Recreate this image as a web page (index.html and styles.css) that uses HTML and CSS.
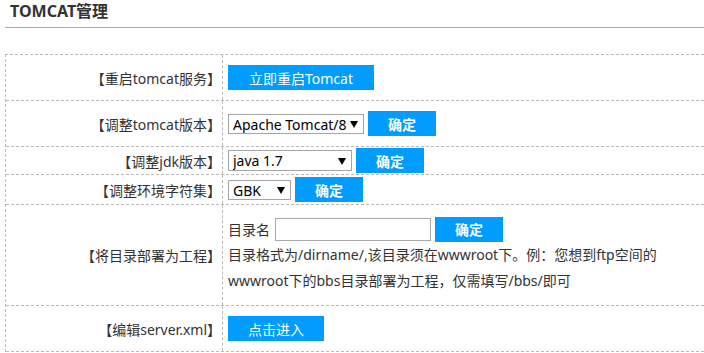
FILE: index.html
```html
<!DOCTYPE html>
<html lang="zh-CN">
<head>
    <meta charset="UTF-8">
    <title>TOMCAT管理</title>
    <link rel="stylesheet" href="styles.css">
</head>
<body>
    <div class="page">
        <h1 class="page-title">TOMCAT管理</h1>

        <div class="manage-panel">
            <div class="manage-row row-tall">
                <div class="row-label">【重启tomcat服务】</div>
                <div class="row-field">
                    <button type="button" class="btn btn-restart">立即重启Tomcat</button>
                </div>
            </div>

            <div class="manage-row row-tall">
                <div class="row-label">【调整tomcat版本】</div>
                <div class="row-field">
                    <span class="select-box select-tomcat">
                        <select>
                            <option>Apache Tomcat/8</option>
                            <option>Apache Tomcat/7</option>
                        </select>
                    </span>
                    <button type="button" class="btn btn-ok">确定</button>
                </div>
            </div>

            <div class="manage-row row-jdk">
                <div class="row-label">【调整jdk版本】</div>
                <div class="row-field">
                    <span class="select-box select-jdk">
                        <select>
                            <option>java 1.7</option>
                            <option>java 1.8</option>
                        </select>
                    </span>
                    <button type="button" class="btn btn-ok">确定</button>
                </div>
            </div>

            <div class="manage-row row-charset">
                <div class="row-label">【调整环境字符集】</div>
                <div class="row-field">
                    <span class="select-box select-charset">
                        <select>
                            <option>GBK</option>
                            <option>UTF-8</option>
                        </select>
                    </span>
                    <button type="button" class="btn btn-ok">确定</button>
                </div>
            </div>

            <div class="manage-row row-deploy">
                <div class="row-label">【将目录部署为工程】</div>
                <div class="row-field field-deploy">
                    <div class="deploy-form">
                        <span>目录名</span>
                        <input type="text" class="dir-input">
                        <button type="button" class="btn btn-ok">确定</button>
                    </div>
                    <p class="deploy-tip">目录格式为/dirname/,该目录须在wwwroot下。例：您想到ftp空间的<br>wwwroot下的bbs目录部署为工程，仅需填写/bbs/即可</p>
                </div>
            </div>

            <div class="manage-row row-tall">
                <div class="row-label">【编辑server.xml】</div>
                <div class="row-field">
                    <button type="button" class="btn btn-enter">点击进入</button>
                </div>
            </div>
        </div>
    </div>
</body>
</html>
```

FILE: styles.css
```css
* {
    margin: 0;
    padding: 0;
    box-sizing: border-box;
}

:root {
    --blue: #009cff;
    --dash: 1px dashed #bbb;
    --text: #333;
}

body {
    font-family: 'Noto Sans', 'Noto Sans CJK SC', sans-serif;
    color: var(--text);
    background: #fff;
    overflow: hidden;
}

.page {
    padding-left: 5px;
}

.page-title {
    height: 28px;
    padding-left: 5px;
    font-size: 16px;
    line-height: 22px;
    font-weight: bold;
    border-bottom: 1px solid #aaa;
}

.manage-panel {
    margin-top: 26px;
    border-top: var(--dash);
    border-left: var(--dash);
}

.manage-row {
    display: flex;
    border-bottom: var(--dash);
}

.row-tall { height: 46px; }
.row-jdk { height: 28px; }
.row-charset { height: 30px; }
.row-deploy { height: 101px; }

.row-label {
    width: 217px;
    flex: none;
    display: flex;
    align-items: center;
    justify-content: flex-end;
    padding-right: 1px;
    font-size: 14px;
    border-right: var(--dash);
}

.row-field {
    flex: 1;
    display: flex;
    align-items: center;
    gap: 4px;
    padding-left: 5px;
    font-size: 14px;
}

.field-deploy {
    flex-direction: column;
    align-items: flex-start;
    gap: 0;
    padding-top: 11px;
}

.deploy-form {
    display: flex;
    align-items: center;
    gap: 5px;
    height: 26px;
}

.deploy-form .btn {
    margin-left: -1px;
}

.dir-input {
    width: 156px;
    height: 23px;
    border: 1px solid #a9a9a9;
    font-size: 14px;
    padding: 0 4px;
    outline: none;
}

.deploy-tip {
    line-height: 26px;
    white-space: nowrap;
}

.btn {
    height: 25px;
    border: none;
    background: var(--blue);
    color: #fff;
    font-family: inherit;
    font-size: 14px;
    cursor: pointer;
}

.btn-restart { width: 146px; }
.btn-ok { width: 68px; font-weight: 600; }
.btn-enter { width: 96px; }

.select-box {
    position: relative;
    display: inline-block;
}

.select-box select {
    appearance: none;
    -webkit-appearance: none;
    display: block;
    width: 100%;
    height: 100%;
    border: 1px solid #a6a6a6;
    border-radius: 0;
    background: #fff;
    color: #000;
    font-family: inherit;
    font-size: 14px;
    padding: 0 0 0 4px;
    outline: none;
}

.select-box::after {
    content: "";
    position: absolute;
    right: 6px;
    top: 50%;
    margin-top: -3px;
    border-left: 4px solid transparent;
    border-right: 4px solid transparent;
    border-top: 7px solid #000;
    pointer-events: none;
}

.select-tomcat { width: 136px; height: 20px; }
.select-jdk { width: 124px; height: 21px; }
.select-charset { width: 63px; height: 20px; }
```
